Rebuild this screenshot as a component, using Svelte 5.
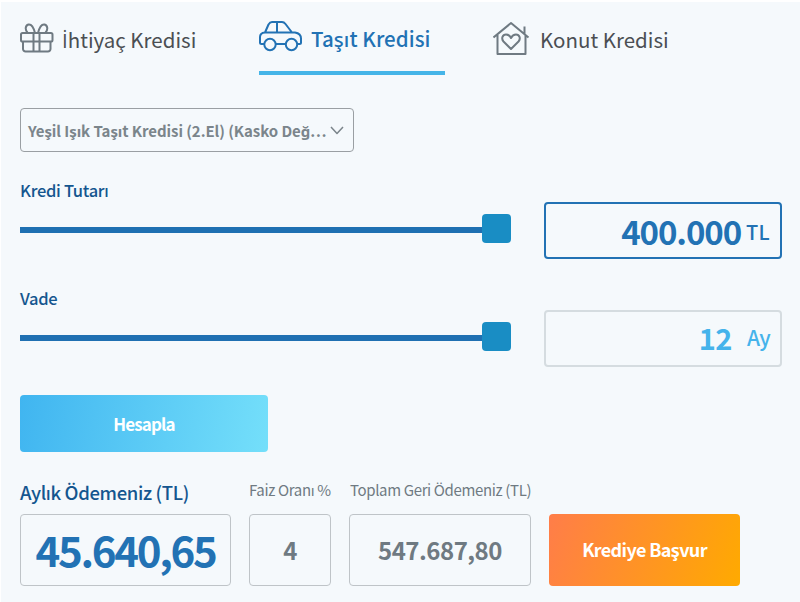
<script lang="ts">
interface Slider {
	id: string;
	label: string;
	value: string;
	unit: string;
}

const sliders: Slider[] = [
	{ id: "amount", label: "Kredi Tutarı", value: "400.000", unit: "TL" },
	{ id: "term", label: "Vade", value: "12", unit: "Ay" },
];

let activeTab = $state("tasit");
</script>

<main class="calculator">
	<nav class="tabs">
		<button class="tab ihtiyac" class:active={activeTab === "ihtiyac"} onclick={() => (activeTab = "ihtiyac")}>
			<svg width="34" height="32" viewBox="0 0 34 32">
				<rect x="1" y="10" width="31.5" height="8.5" rx="1.6" />
				<path d="M3 18.5V26a2.5 2.5 0 0 0 2.5 2.5H28a2.5 2.5 0 0 0 2.5-2.5v-7.500M13.500 10v18.500M19.500 10v18.500" />
				<path d="M15 10C13.500 4 11.500 1 8.500 1.500 5 2.500 5 7 7.500 9.500M18 10C19.500 4 21.500 1 24.500 1.500 28 2.500 28 7 25.500 9.500" />
			</svg>
			<span class="name"><i>İ</i>htiyaç Kredisi</span>
		</button>
		<button class="tab tasit" class:active={activeTab === "tasit"} onclick={() => (activeTab = "tasit")}>
			<svg width="44" height="32" viewBox="0 0 44 32">
				<path d="M5 24H2.500Q1 24 1 22.500V17q0-4 5-4.500L9.500 4.500Q11 2 13 2H23q2 0 3.500 2L33 12.500h3q6 1 6 6v4Q42 24 40.500 24H38M17 24H26.500M6 12.500H33M18 2V12.500" />
				<circle cx="11" cy="24.500" r="5.700" />
				<circle cx="32.500" cy="24.500" r="5.700" />
			</svg>
			<span class="name">Taşıt Kredisi</span>
		</button>
		<button class="tab konut" class:active={activeTab === "konut"} onclick={() => (activeTab = "konut")}>
			<svg width="38" height="36" viewBox="0 0 38 36">
				<path d="M.500 16.500L18 2 35.500 16.500M4.500 14V33H32.500V14M31.500 13V5.500" />
				<path d="M18 28L10.500 20.500C8 17.500 9.500 13.500 13 13.500 15.500 13.500 17 15 18 17 19 15 20.500 13.500 23 13.500 26.500 13.500 28 17.500 25.500 20.500Z" />
			</svg>
			<span class="name">Konut Kredisi</span>
		</button>
	</nav>

	<button class="select">
		<span>Yeşil Işık Taşıt Kredisi (2.El) (Kasko Değ…</span>
		<svg width="14" height="9" viewBox="0 0 14 9"><path d="M1 1l6 6.500 6-6.500" /></svg>
	</button>

	{#each sliders as slider (slider.id)}
		<section class="field {slider.id}">
			<div class="control">
				<h2>{slider.label}</h2>
				<div class="slider">
					<div class="track"></div>
					<div class="thumb"></div>
				</div>
			</div>
			<div class="amount-box">
				<strong>{slider.value}</strong>
				<span>{slider.unit}</span>
			</div>
		</section>
	{/each}

	<button class="calculate">Hesapla</button>

	<section class="results">
		<div class="result monthly">
			<h3>Aylık Ödemeniz (TL)</h3>
			<div class="box">45.640,65</div>
		</div>
		<div class="result rate">
			<h3>Faiz Oranı %</h3>
			<div class="box">4</div>
		</div>
		<div class="result total">
			<h3>Toplam Geri Ödemeniz (TL)</h3>
			<div class="box">547.687,80</div>
		</div>
		<button class="apply">Krediye Başvur</button>
	</section>
</main>

<style>
	:global(body) {
		background: #fff;
	}

	.calculator {
		box-sizing: border-box;
		height: 600px;
		margin: 2px 0 0 1px;
		padding: 0 18px 0 19px;
		overflow: hidden;
		background: #f5f9fc;
		font-family: "Noto Sans CJK SC", "Noto Sans", sans-serif;
		color: #6f7a82;
		white-space: nowrap;
	}

	button {
		box-sizing: border-box;
		padding: 0;
		border: 0;
		background: none;
		font: inherit;
		color: inherit;
		white-space: nowrap;
	}

	h2,
	h3 {
		margin: 0;
	}

	svg {
		flex: none;
		fill: none;
		stroke: currentColor;
		stroke-width: 2;
		stroke-linejoin: round;
	}

	.tabs {
		display: flex;
		height: 73px;
	}

	.tab {
		display: flex;
		align-items: flex-start;
		box-sizing: border-box;
		height: 73px;
		font-size: 20.5px;
		line-height: 30px;
	}

	.name {
		color: #4b4f53;
	}

	/* the CJK face has no dotted capital I */
	.name i {
		font-family: "Open Sans", "Noto Sans", sans-serif;
		font-style: normal;
		line-height: 1;
	}

	.ihtiyac {
		width: 239px;
		padding-top: 21px;
	}

	.ihtiyac .name {
		margin: 1px 0 0 8px;
	}

	.tasit {
		width: 186px;
		padding-top: 18px;
		margin-right: 48px;
	}

	.tasit .name {
		margin: 3px 0 0 8px;
	}

	.konut {
		padding-top: 19px;
	}

	.konut .name {
		margin: 3px 0 0 9px;
	}

	.tab.active {
		border-bottom: 4px solid #45b5e8;
		color: #2272b4;
	}

	.tab.active .name {
		color: #2272b4;
		font-weight: 500;
		letter-spacing: 0.05px;
	}

	.select {
		display: flex;
		align-items: center;
		justify-content: space-between;
		width: 334px;
		height: 44px;
		margin-top: 33px;
		padding: 0 9px 0 7px;
		border: 1.5px solid #9a9fa3;
		border-radius: 4px;
		font-size: 15px;
		font-weight: 700;
		letter-spacing: -0.07px;
		color: #7b858b;
	}

	.select svg {
		stroke-width: 1.5;
	}

	.field {
		display: flex;
		justify-content: space-between;
		height: 82px;
		margin-top: 26px;
	}

	.control {
		width: 491px;
	}

	h2 {
		height: 26px;
		font-size: 16.5px;
		font-weight: 500;
		line-height: 25px;
		letter-spacing: -0.3px;
		color: #14568f;
	}

	.slider {
		display: flex;
		align-items: center;
		height: 29px;
		margin-top: 10px;
	}

	.track {
		flex: 1;
		height: 6px;
		margin-top: 3px;
		background: #1f70b2;
	}

	.thumb {
		width: 29px;
		height: 29px;
		border-radius: 4px;
		background: #198dc4;
	}

	.amount-box {
		display: flex;
		align-items: center;
		justify-content: flex-end;
		box-sizing: border-box;
		width: 238px;
		height: 57px;
		margin-top: 24px;
		padding-right: 10px;
		border: 2px solid #2272b4;
		border-radius: 4px;
		color: #2272b4;
	}

	.amount-box strong {
		font-size: 33px;
		font-weight: 700;
		letter-spacing: -1.1px;
	}

	.amount-box span {
		margin-left: 5px;
		padding-top: 1px;
		font-size: 20px;
		font-weight: 500;
		letter-spacing: 0.3px;
	}

	.term .amount-box {
		padding-bottom: 3px;
		border-color: #d5dce0;
		color: #45b3eb;
	}

	.term strong {
		font-size: 29px;
		letter-spacing: -0.5px;
	}

	.term .amount-box span {
		margin-left: 15px;
		padding-top: 0;
		font-size: 21px;
		letter-spacing: -0.6px;
	}

	.calculate {
		display: block;
		width: 248px;
		height: 57px;
		margin-top: 27px;
		padding-bottom: 1px;
		border-radius: 4px;
		background: linear-gradient(100deg, #40b5f0, #74dffa);
		color: #fff;
		font-size: 17px;
		font-weight: 700;
		letter-spacing: -0.85px;
	}

	.results {
		display: flex;
		align-items: flex-end;
		margin-top: 27px;
	}

	.result h3 {
		height: 35px;
		font-size: 15px;
		font-weight: 400;
		line-height: 22px;
		letter-spacing: -0.36px;
	}

	.box {
		display: flex;
		align-items: center;
		justify-content: center;
		box-sizing: border-box;
		height: 72px;
		padding-bottom: 2px;
		border: 1.5px solid #bfc4c8;
		border-radius: 4px;
		font-size: 24px;
		font-weight: 700;
		letter-spacing: -0.5px;
	}

	.monthly {
		width: 211px;
		margin-right: 18px;
	}

	.monthly h3 {
		color: #14568f;
		font-size: 18.5px;
		font-weight: 500;
		line-height: 26px;
		letter-spacing: -0.35px;
	}

	.monthly .box {
		padding-bottom: 4px;
		font-size: 42px;
		letter-spacing: -2.3px;
		color: #2272b4;
	}

	.rate {
		width: 82px;
		margin-right: 18px;
	}

	.total {
		width: 182px;
		margin-right: 18px;
	}

	.total h3 {
		padding-left: 1px;
	}

	.apply {
		width: 191px;
		height: 72px;
		padding-bottom: 2px;
		border-radius: 4px;
		background: linear-gradient(110deg, #ff7d49, #ffaa00);
		color: #fff;
		font-size: 18px;
		font-weight: 700;
		letter-spacing: -0.65px;
	}
</style>
